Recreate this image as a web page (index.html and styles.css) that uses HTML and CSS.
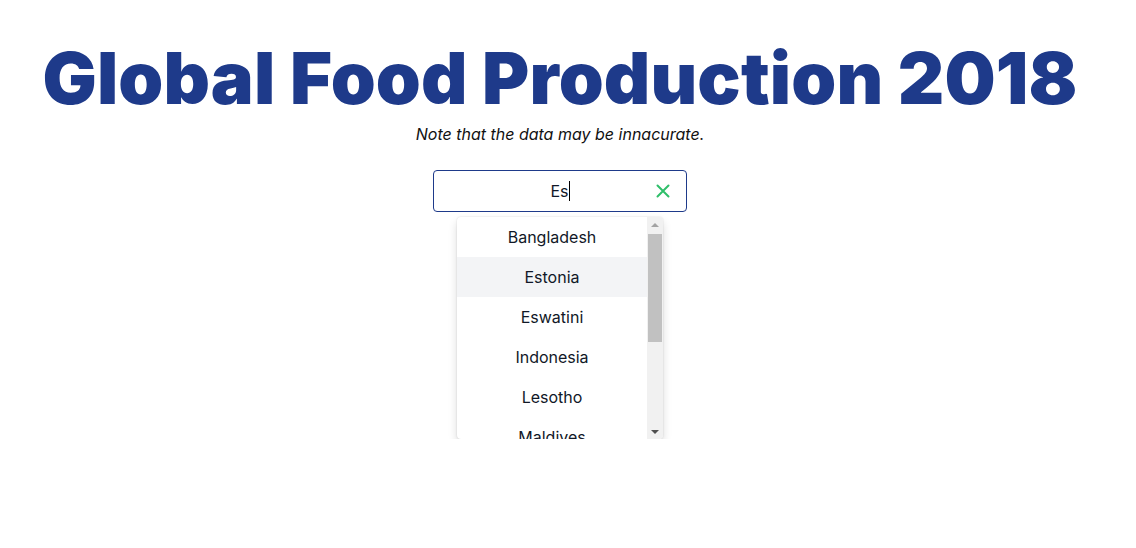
FILE: index.html
```html
<!DOCTYPE html>
<html>
<head>
<meta charset="utf-8">
<link rel="stylesheet" href="styles.css">
</head>
<body>
<main class="page">
  <h1 class="title">Global Food Production 2018</h1>
  <p class="note">Note that the data may be innacurate.</p>
  <div class="combo">
    <div class="field">
      <span class="value">Es<span class="caret"></span></span>
      <svg class="clear" width="14" height="14" viewBox="0 0 14 14"><path d="M1.5 1.5 L12.5 12.5 M12.5 1.5 L1.5 12.5" stroke="#2fbf6a" stroke-width="2" stroke-linecap="round" fill="none"/></svg>
    </div>
    <div class="dropdown">
      <ul class="list">
        <li>Bangladesh</li>
        <li class="active">Estonia</li>
        <li>Eswatini</li>
        <li>Indonesia</li>
        <li>Lesotho</li>
        <li>Maldives</li>
        <li>Philippines</li>
        <li>Seychelles</li>
        <li>Timor-Leste</li>
        <li>United States</li>
      </ul>
      <div class="scrollbar">
        <div class="sb-btn"><svg width="8" height="4" viewBox="0 0 8 4"><polygon points="0,4 8,4 4,0" fill="#a3a3a3"/></svg></div>
        <div class="sb-track"><div class="sb-thumb"></div></div>
        <div class="sb-btn"><svg width="8" height="4" viewBox="0 0 8 4"><polygon points="0,0 8,0 4,4" fill="#505050"/></svg></div>
      </div>
    </div>
  </div>
</main>
</body>
</html>
```
FILE: styles.css
```css
* { box-sizing: border-box; }
html, body { margin: 0; padding: 0; background: #fff; }
body { font-family: Inter, "Noto Sans", sans-serif; color: #111827; }
.page {
  width: 1120px;
  display: flex;
  flex-direction: column;
  align-items: center;
  padding-top: 42px;
}
.title {
  margin: 0;
  font-size: 72px;
  line-height: 72px;
  font-weight: 900;
  color: #1e3a8a;
  letter-spacing: 0.15px;
  white-space: nowrap;
}
.note {
  margin: 8px 0 0;
  font-size: 16px;
  line-height: 24px;
  font-style: italic;
  color: #111;
}
.combo {
  margin-top: 24px;
  display: flex;
  flex-direction: column;
  align-items: center;
}
.field {
  width: 254px;
  height: 42px;
  border: 1px solid #1e3a8a;
  border-radius: 4px;
  display: flex;
  align-items: center;
  justify-content: center;
  position: relative;
  font-size: 16px;
}
.value { display: inline-flex; align-items: center; }
.caret {
  display: inline-block;
  width: 1px;
  height: 20px;
  background: #000;
}
.clear {
  position: absolute;
  right: 16px;
  top: 13px;
}
.dropdown {
  margin-top: 5px;
  width: 206px;
  height: 222px;
  display: flex;
  overflow: hidden;
  border-radius: 4px;
  background: #fff;
  box-shadow: 0 5px 10px rgba(0,0,0,0.14), 0 0 2px rgba(0,0,0,0.14);
}
.list {
  list-style: none;
  margin: 0;
  padding: 0;
  flex: 1;
  overflow: hidden;
}
.list li {
  height: 40px;
  line-height: 40px;
  text-align: center;
  font-size: 16px;
  color: #111827;
}
.list li.active { background: #f3f4f6; }
.scrollbar {
  width: 16px;
  background: #f1f1f1;
  display: flex;
  flex-direction: column;
}
.sb-btn {
  height: 15px;
  display: flex;
  align-items: center;
  justify-content: center;
}
.sb-track {
  flex: 1;
  padding: 2px 1px 0 1px;
}
.sb-thumb {
  height: 108px;
  background: #c1c1c1;
}
```
